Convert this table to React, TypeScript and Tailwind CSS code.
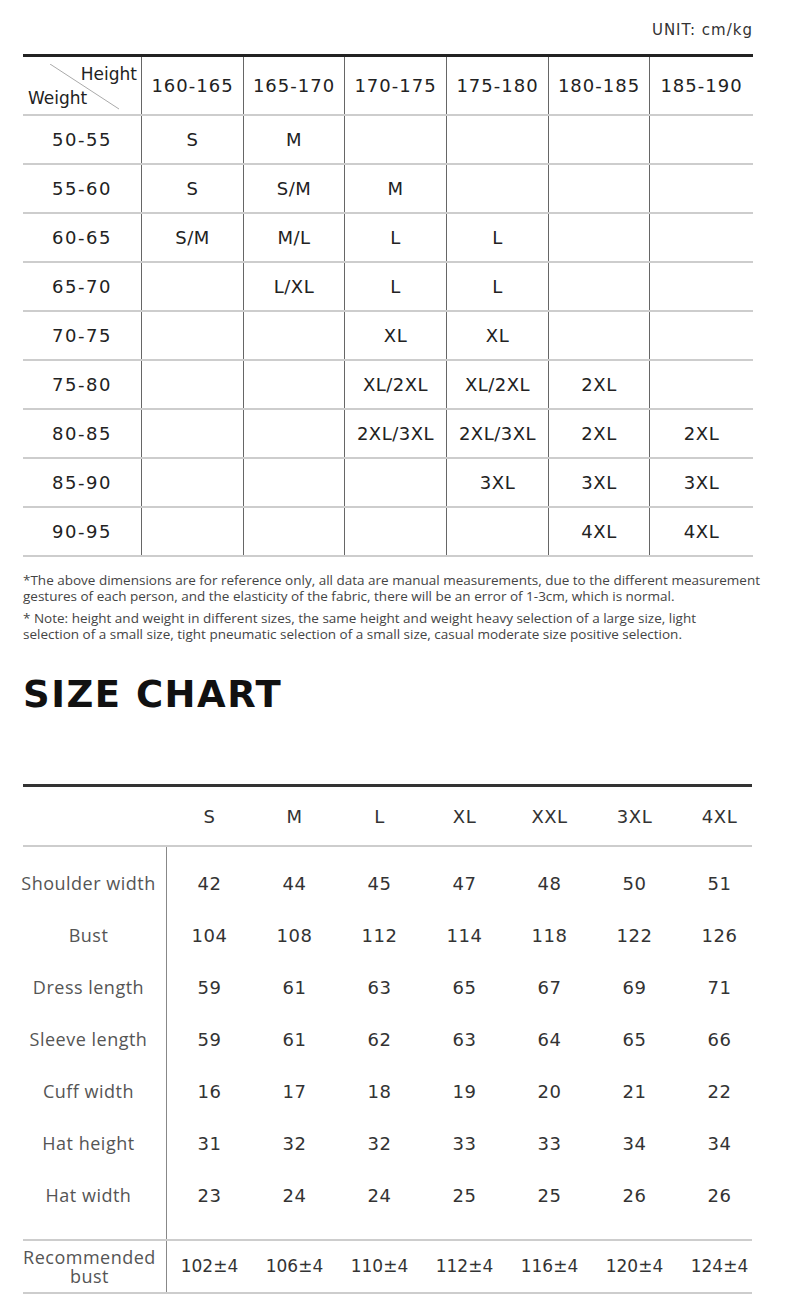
const heights = ["160-165", "165-170", "170-175", "175-180", "180-185", "185-190"];

const weightRows: [string, string[]][] = [
  ["50-55", ["S", "M", "", "", "", ""]],
  ["55-60", ["S", "S/M", "M", "", "", ""]],
  ["60-65", ["S/M", "M/L", "L", "L", "", ""]],
  ["65-70", ["", "L/XL", "L", "L", "", ""]],
  ["70-75", ["", "", "XL", "XL", "", ""]],
  ["75-80", ["", "", "XL/2XL", "XL/2XL", "2XL", ""]],
  ["80-85", ["", "", "2XL/3XL", "2XL/3XL", "2XL", "2XL"]],
  ["85-90", ["", "", "", "3XL", "3XL", "3XL"]],
  ["90-95", ["", "", "", "", "4XL", "4XL"]],
];

const sizes = ["S", "M", "L", "XL", "XXL", "3XL", "4XL"];

const measures: [string, string[]][] = [
  ["Shoulder width", ["42", "44", "45", "47", "48", "50", "51"]],
  ["Bust", ["104", "108", "112", "114", "118", "122", "126"]],
  ["Dress length", ["59", "61", "63", "65", "67", "69", "71"]],
  ["Sleeve length", ["59", "61", "62", "63", "64", "65", "66"]],
  ["Cuff width", ["16", "17", "18", "19", "20", "21", "22"]],
  ["Hat height", ["31", "32", "32", "33", "33", "34", "34"]],
  ["Hat width", ["23", "24", "24", "25", "25", "26", "26"]],
];

const bust = ["102±4", "106±4", "110±4", "112±4", "116±4", "120±4", "124±4"];

const wide = "font-['DejaVu_Sans',sans-serif]";
const firstCols = "grid grid-cols-[119px_102px_101px_102px_102px_101px_103px]";
const chartCols = "grid grid-cols-[repeat(7,85px)]";

function WeightTable() {
  return (
    <div className={`w-[730px] border-t-[3px] border-[#222] text-[#222] ${wide}`}>
      <div className={`${firstCols} h-[59px] border-b-2 border-[#cdcdcd]`}>
        <div className="relative flex flex-col justify-between border-r border-[#666] pl-[5px] pr-[4px] pt-[6px] pb-[5px] text-[17px] leading-[22px]">
          <svg className="absolute left-[27px] top-[7px]" width="70" height="46">
            <line x1="0" y1="0" x2="69" y2="45" stroke="#aaa" strokeWidth="1" />
          </svg>
          <span className="self-end">Height</span>
          <span className="self-start">Weight</span>
        </div>
        {heights.map((h, i) => (
          <div
            key={h}
            className={`flex items-center justify-center text-[18px] tracking-[1px] ${i < 5 ? "border-r border-[#666]" : ""}`}
          >
            {h}
          </div>
        ))}
      </div>
      {weightRows.map(([w, cells]) => (
        <div key={w} className={`${firstCols} h-[49px] border-b-2 border-[#cdcdcd]`}>
          <div className="flex items-center justify-center border-r border-[#666] text-[18px] tracking-[1.5px]">{w}</div>
          {cells.map((c, i) => (
            <div
              key={i}
              className={`flex items-center justify-center whitespace-nowrap text-[18px] tracking-[0.5px] ${i < 5 ? "border-r border-[#666]" : ""}`}
            >
              {c}
            </div>
          ))}
        </div>
      ))}
    </div>
  );
}

function SizeChart() {
  return (
    <div className="w-[729px] border-t-[3px] border-[#333] text-[#333]">
      <div className={`flex h-[60px] border-b-2 border-[#cdcdcd] ${wide}`}>
        <div className="w-[144px] shrink-0" />
        <div className={chartCols}>
          {sizes.map((s) => (
            <div key={s} className="flex items-center justify-center text-[18px] tracking-[0.5px]">
              {s}
            </div>
          ))}
        </div>
      </div>
      <div className="flex border-b-2 border-[#cdcdcd]">
        <div className="w-[144px] shrink-0 border-r border-[#888] pt-[10px] pb-[18px] pr-[12px] font-['Open_Sans',sans-serif] text-[18px] tracking-[0.5px] text-[#555]">
          {measures.map(([label]) => (
            <div key={label} className="flex h-[52px] items-center justify-center whitespace-nowrap">
              {label}
            </div>
          ))}
        </div>
        <div className={`pt-[10px] pb-[18px] ${wide}`}>
          {measures.map(([label, vals]) => (
            <div key={label} className={`${chartCols} h-[52px]`}>
              {vals.map((v, i) => (
                <div key={i} className="flex items-center justify-center text-[18px] tracking-[0.5px]">
                  {v}
                </div>
              ))}
            </div>
          ))}
        </div>
      </div>
      <div className="flex h-[53px] border-b-2 border-[#cdcdcd]">
        <div className="flex w-[144px] shrink-0 flex-col items-center justify-center border-r border-[#888] pr-[10px] font-['Open_Sans',sans-serif] text-[18px] leading-[19px] tracking-[0.5px] text-[#555]">
          <span>Recommended</span>
          <span>bust</span>
        </div>
        <div className={`${chartCols} ${wide}`}>
          {bust.map((b) => (
            <div key={b} className="flex items-center justify-center text-[17px]">
              {b}
            </div>
          ))}
        </div>
      </div>
    </div>
  );
}

export default function App() {
  return (
    <div className="min-h-[1304px] w-[790px] bg-white pl-[23px]">
      <div className={`flex justify-end pr-[37px] pt-[21px] pb-[15px] text-[15px] leading-[18px] tracking-[1px] text-[#333] ${wide}`}>
        UNIT: cm/kg
      </div>
      <WeightTable />
      <div className="mt-[15px] font-['Open_Sans',sans-serif] text-[13.5px] leading-[16px] text-[#444]">
        <p className="whitespace-nowrap">
          *The above dimensions are for reference only, all data are manual measurements, due to the different measurement
        </p>
        <p className="whitespace-nowrap">
          gestures of each person, and the elasticity of the fabric, there will be an error of 1-3cm, which is normal.
        </p>
        <p className="mt-[6px] whitespace-nowrap">
          * Note: height and weight in different sizes, the same height and weight heavy selection of a large size, light
        </p>
        <p className="whitespace-nowrap">
          selection of a small size, tight pneumatic selection of a small size, casual moderate size positive selection.
        </p>
      </div>
      <h1 className={`mt-[33px] text-[37px] leading-[40px] font-bold tracking-[1.5px] text-[#111] ${wide}`}>SIZE CHART</h1>
      <div className="mt-[69px]">
        <SizeChart />
      </div>
    </div>
  );
}
